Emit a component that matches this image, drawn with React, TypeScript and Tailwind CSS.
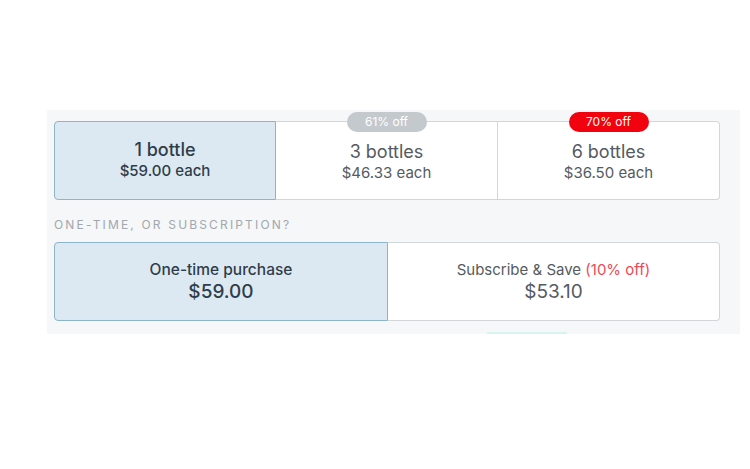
import React from "react";

export default function App() {
  const font = { fontFamily: "Inter, 'Noto Sans', sans-serif" };
  return (
    <div className="w-[750px] h-[469px] bg-white" style={font}>
      <div className="pt-[110px] pl-[47px]">
        <div className="w-[693px] h-[224px] bg-[#f5f7f9] pt-[11px] pl-[7px] relative">
          <div className="flex w-[666px] h-[79px]">
            <div className="w-[222px] h-full flex flex-col items-center justify-center bg-[#dde9f2] border border-[#8db4cb] rounded-l-[4px] text-[#2f3d4a] font-medium pb-[2px]">
              <div className="text-[18px] leading-[22px]">1 bottle</div>
              <div className="text-[15px] leading-[20px]">$59.00 each</div>
            </div>
            <div className="relative w-[222px] h-full flex flex-col items-center justify-center bg-white border-y border-r border-[#d3d6d9] text-[#555b61] pt-[2px]">
              <div className="absolute -top-[10px] left-1/2 -translate-x-1/2 w-[80px] h-[20px] rounded-full bg-[#c4c9cd] text-white text-[12px] leading-[20px] text-center">61% off</div>
              <div className="text-[18px] leading-[22px]">3 bottles</div>
              <div className="text-[15px] leading-[20px]">$46.33 each</div>
            </div>
            <div className="relative w-[222px] h-full flex flex-col items-center justify-center bg-white border-y border-r border-[#d3d6d9] rounded-r-[4px] text-[#555b61] pt-[2px]">
              <div className="absolute -top-[10px] left-1/2 -translate-x-1/2 w-[80px] h-[20px] rounded-full bg-[#f2020e] text-white text-[12px] leading-[20px] text-center">70% off</div>
              <div className="text-[18px] leading-[22px]">6 bottles</div>
              <div className="text-[15px] leading-[20px]">$36.50 each</div>
            </div>
          </div>
          <div className="mt-[17px] h-[16px] text-[12px] leading-[16px] tracking-[0.18em] text-[#a2a7ac]">ONE-TIME, OR SUBSCRIPTION?</div>
          <div className="flex w-[666px] h-[79px] mt-[9px]">
            <div className="w-[334px] h-full flex flex-col items-center justify-center bg-[#dde9f2] border border-[#8db4cb] rounded-l-[4px] text-[#2f3d4a] font-medium">
              <div className="text-[15.5px] leading-[20px]">One-time purchase</div>
              <div className="text-[19px] leading-[24px]">$59.00</div>
            </div>
            <div className="w-[332px] h-full flex flex-col items-center justify-center bg-white border-y border-r border-[#d3d6d9] rounded-r-[4px] text-[#555b61]">
              <div className="text-[15px] leading-[20px]">
                Subscribe &amp; Save <span className="text-[#ec4a57]">(10% off)</span>
              </div>
              <div className="text-[19px] leading-[24px]">$53.10</div>
            </div>
          </div>
          <div className="absolute bottom-0 left-[440px] w-[80px] h-[2px] bg-[#d8f4ee] rounded-full" />
        </div>
      </div>
    </div>
  );
}
